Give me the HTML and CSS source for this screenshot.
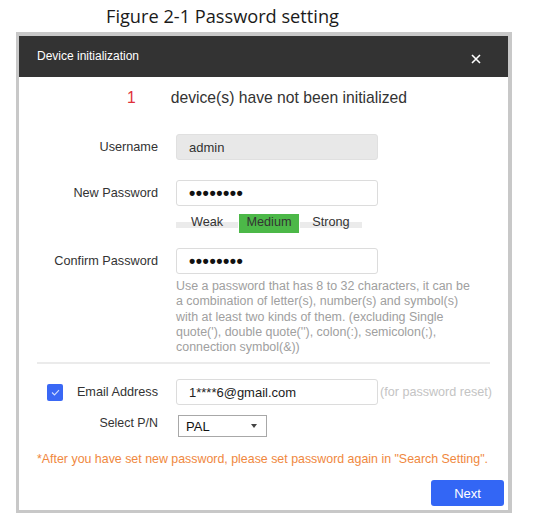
FILE: index.html
```html
<!DOCTYPE html>
<html lang="en">
<head>
    <meta charset="UTF-8">
    <meta name="viewport" content="width=device-width, initial-scale=1.0">
    <title>Password setting</title>
    <link rel="stylesheet" href="styles.css">
</head>
<body>
    <p class="figure-title">Figure 2-1 Password setting</p>

    <div class="dialog">
        <div class="dialog-header">
            <span>Device initialization</span>
            <svg class="close" width="10" height="10" viewBox="0 0 10 10">
                <path d="M1 1 L9 9 M9 1 L1 9" stroke="#fff" stroke-width="1.6" fill="none"/>
            </svg>
        </div>

        <div class="status">
            <span class="count">1</span>
            <span class="status-text">device(s) have not been initialized</span>
        </div>

        <div class="row row-user">
            <label class="label">Username</label>
            <div class="field disabled">admin</div>
        </div>

        <div class="row row-pass">
            <label class="label">New Password</label>
            <div class="field"><span class="dots">&bull;&bull;&bull;&bull;&bull;&bull;&bull;&bull;</span></div>
        </div>

        <div class="strength">
            <span class="level">Weak</span>
            <span class="level active">Medium</span>
            <span class="level">Strong</span>
        </div>

        <div class="row row-confirm">
            <label class="label">Confirm Password</label>
            <div class="field"><span class="dots">&bull;&bull;&bull;&bull;&bull;&bull;&bull;&bull;</span></div>
        </div>

        <p class="hint">Use a password that has 8 to 32 characters, it can be a combination of letter(s), number(s) and symbol(s) with at least two kinds of them. (excluding Single quote('), double quote(''), colon(:), semicolon(;), connection symbol(&amp;))</p>

        <div class="divider"></div>

        <div class="row row-email">
            <label class="label label-check">
                <span class="checkbox">
                    <svg width="9" height="7" viewBox="0 0 9 7">
                        <path d="M1 3.5 L3.5 6 L8 1.2" stroke="#cfdcff" stroke-width="1.1" fill="none"/>
                    </svg>
                </span>
                <span>Email Address</span>
            </label>
            <div class="field email">1****6@gmail.com</div>
            <span class="aside">(for password reset)</span>
        </div>

        <div class="row row-select">
            <label class="label">Select P/N</label>
            <div class="select">
                <span>PAL</span>
                <span class="caret"></span>
            </div>
        </div>

        <p class="note">*After you have set new password, please set password again in "Search Setting".</p>

        <div class="footer">
            <button class="btn-next">Next</button>
        </div>
    </div>
</body>
</html>
```

FILE: styles.css
```css
/* Device initialization dialog */
* {
    box-sizing: border-box;
}

body {
    margin: 0;
    background: #fff;
    font-family: "Liberation Sans", Arial, sans-serif;
    color: #333;
}

.figure-title {
    margin: 0;
    padding: 4px 0 0 106px;
    height: 32px;
    font-family: "Open Sans", sans-serif;
    font-size: 18.2px;
    color: #1a1a1a;
}

.dialog {
    margin-left: 16px;
    width: 496px;
    height: 481px;
    border: 3px solid #c8c8c8;
    border-top-width: 4px;
    border-right-width: 4px;
    background: #fff;
}

.dialog-header {
    height: 41px;
    padding: 0 27px 0 18px;
    display: flex;
    align-items: center;
    justify-content: space-between;
    background: #333;
    color: #fff;
    font-size: 12px;
}

.dialog-header span {
    margin-top: -2px;
}

.close {
    margin-top: 4px;
}

.status {
    margin-top: 11px;
    height: 20px;
    display: flex;
    align-items: center;
    padding-left: 108px;
    font-size: 15.7px;
}

.status .count {
    color: #e0303a;
}

.status-text {
    margin-left: 35px;
}

.row {
    display: flex;
    align-items: center;
    font-size: 12.7px;
}

.label {
    width: 139px;
    margin-right: 18px;
    text-align: right;
}

.field {
    width: 202px;
    height: 26px;
    padding-left: 12px;
    display: flex;
    align-items: center;
    border: 1px solid #dcdcdc;
    border-radius: 3px;
    background: #fff;
    font-size: 13px;
}

.field.disabled {
    background: #e8e8e8;
    border-color: #e0e0e0;
}

.dots {
    font-size: 18px;
    font-weight: bold;
    letter-spacing: 0.5px;
    color: #111;
    line-height: 1;
}

.row-user {
    margin-top: 26px;
}

.row-pass {
    margin-top: 20px;
}

.strength {
    margin: 8px 0 0 157px;
    display: flex;
    font-size: 12.7px;
}

.level {
    width: 62px;
    height: 19px;
    padding-bottom: 4px;
    display: flex;
    align-items: center;
    justify-content: center;
    background: linear-gradient(transparent 8px, #ebebeb 8px, #ebebeb 14px, transparent 14px);
}

.level + .level {
    margin-left: 1px;
}

.level.active {
    width: 60px;
    background: #4cb848;
}

.row-confirm {
    margin-top: 15px;
}

.hint {
    margin: 5px 0 0 157px;
    width: 300px;
    font-size: 12.45px;
    line-height: 15.25px;
    color: #a0a0a0;
}

.divider {
    margin: 7px 18px 0;
    height: 2px;
    background: #ebebeb;
}

.row-email {
    margin-top: 15px;
}

.label-check {
    display: flex;
    align-items: center;
    justify-content: space-between;
    padding-left: 28px;
}

.checkbox {
    width: 16px;
    height: 17px;
    display: flex;
    align-items: center;
    justify-content: center;
    border-radius: 2px;
    background: #3a68f5;
}

.field.email {
    color: #222;
}

.aside {
    margin-left: 2px;
    font-size: 12.6px;
    color: #c4c4c4;
}

.row-select {
    margin-top: 10px;
}

.row-select .label {
    margin-top: -7px;
    font-size: 12.4px;
}

.select {
    width: 89px;
    height: 22px;
    margin-left: 2px;
    padding: 0 9px 0 7px;
    display: flex;
    align-items: center;
    justify-content: space-between;
    border: 1px solid #a8a8a8;
    font-size: 13px;
    color: #111;
}

.caret {
    width: 0;
    height: 0;
    border-left: 3.5px solid transparent;
    border-right: 3.5px solid transparent;
    border-top: 4px solid #444;
}

.note {
    margin: 15px 0 0 18px;
    font-size: 12.4px;
    line-height: 15px;
    color: #f0883e;
}

.footer {
    margin-top: 13px;
    padding-right: 4px;
    display: flex;
    justify-content: flex-end;
}

.btn-next {
    width: 73px;
    height: 26px;
    border: none;
    border-radius: 3px;
    background: #3366f5;
    color: #fff;
    font-family: "Liberation Sans", Arial, sans-serif;
    font-size: 13px;
    cursor: pointer;
}
```
